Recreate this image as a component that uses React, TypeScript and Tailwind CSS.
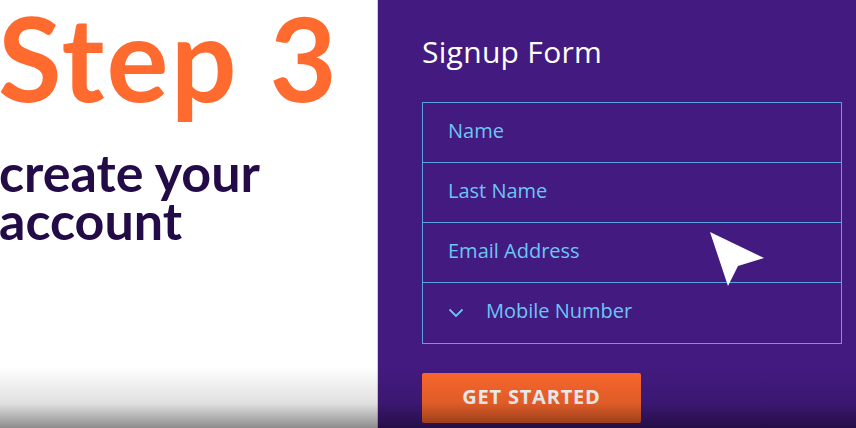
import React from "react";

const Row = ({ children }: { children: React.ReactNode }) => (
  <div className="h-[60px] flex items-center pl-[25px] pb-[4px] text-[20px] text-[#6ac6f4]">{children}</div>
);

export default function App() {
  return (
    <div className="relative w-[856px] h-[428px] overflow-hidden flex">
      <div className="w-[378px] h-full bg-white border-r border-[#cfcfcf] font-['Lato',sans-serif]">
        <div className="text-[116px] leading-[116px] font-bold text-[#ff6a2f] tracking-[0.02em] -ml-[2px]">
          Step 3
        </div>
        <div className="mt-[32px] text-[52px] leading-[48px] font-bold text-[#230b47] -ml-[1px]">
          <div>create your</div>
          <div>account</div>
        </div>
      </div>
      <div className="flex-1 h-full bg-[#431a80] pl-[44px] pr-[14px] font-['Open_Sans',sans-serif]">
        <div className="pt-[32px] h-[72px] text-[30px] leading-[40px] tracking-[0.01em] text-white">Signup Form</div>
        <div className="mt-[30px] border border-[#5aa2e6] divide-y divide-[#5aa2e6]">
          <Row>Name</Row>
          <Row>Last Name</Row>
          <Row>Email Address</Row>
          <Row>
            <svg width="16" height="10" viewBox="0 0 16 10" className="mr-[22px] mt-[4px]">
              <path d="M1.5 1.5 L8 8 L14.5 1.5" fill="none" stroke="#6ac6f4" strokeWidth="1.8" />
            </svg>
            Mobile Number
          </Row>
        </div>
        <button className="mt-[29px] w-[219px] h-[50px] bg-[#fd682d] rounded-[2px] text-white font-bold text-[20px] tracking-[0.04em] flex items-center justify-center pb-[2px]">
          GET STARTED
        </button>
      </div>
      <svg className="absolute left-[700px] top-[225px]" width="70" height="66" viewBox="700 225 70 66">
        <polygon points="710,232 764,258 738,266 728,286" fill="white" />
      </svg>
      <div className="absolute left-0 right-0 bottom-0 h-[62px] bg-linear-to-b from-transparent via-black/12 via-60% to-black/45 pointer-events-none" />
    </div>
  );
}
